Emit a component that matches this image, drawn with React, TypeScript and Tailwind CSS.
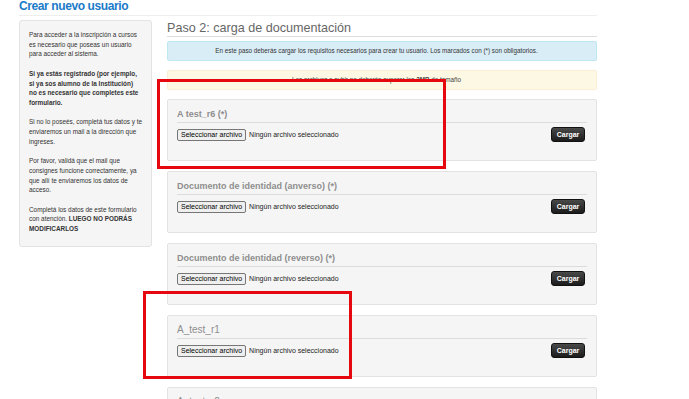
const docs = [
  { title: "A test_r6 (*)", bold: true },
  { title: "Documento de identidad (anverso) (*)", bold: true },
  { title: "Documento de identidad (reverso) (*)", bold: true },
  { title: "A_test_r1", bold: false },
  { title: "A_test_r2", bold: false },
];

function FileField() {
  return (
    <div className="flex items-center">
      <span className="h-[12px] px-[3px] flex items-center border border-[#767676] bg-[#efefef] rounded-[2px] text-[7px] leading-none text-black">
        Seleccionar archivo
      </span>
      <span className="ml-[3px] text-[7px] leading-none text-[#222]">
        Ningún archivo seleccionado
      </span>
    </div>
  );
}

function DocCard({ title, bold }: { title: string; bold: boolean }) {
  return (
    <div className="h-[62px] shrink-0 bg-[#f5f5f5] border border-[#e3e3e3] rounded-[2px] px-[9px] pt-[8px]">
      <div
        className={`h-[15px] border-b border-[#dcdcdc] leading-[12px] text-[#8e8e8e] ${
          bold ? "text-[9px] font-bold" : "text-[10px]"
        }`}
      >
        {title}
      </div>
      <div className="mt-[4px] h-[15px] flex items-center justify-between pr-[2px]">
        <FileField />
        <button className="w-[34px] h-[15px] rounded-[3px] border border-[#111] bg-linear-to-b from-[#4a4a4a] to-[#1c1c1c] text-white text-[7px] font-bold leading-none">
          Cargar
        </button>
      </div>
    </div>
  );
}

export default function App() {
  return (
    <div className="w-[689px] h-[399px] overflow-hidden bg-white relative font-['Liberation_Sans',Arial,sans-serif]">
      <div className="ml-[19px] w-[578px]">
        <h1 className="h-[16px] border-b border-[#eee] text-[12px] leading-[12px] font-bold tracking-[-0.4px] text-[#1a7bc9]">
          Crear nuevo usuario
        </h1>

        <div className="mt-[4px] flex gap-[15px] items-start">
          {/* Sidebar */}
          <div className="w-[133px] h-[227px] shrink-0 bg-[#f5f5f5] border border-[#e3e3e3] rounded-[3px] pl-[9px] pt-[9px] text-[6.4px] leading-[9.7px] text-[#333] whitespace-nowrap">
            <p className="mb-[9.7px]">
              Para acceder a la inscripción a cursos
              <br />
              es necesario que poseas un usuario
              <br />
              para acceder al sistema.
            </p>
            <p className="mb-[9.7px] font-bold">
              Si ya estás registrado (por ejemplo,
              <br />
              si ya sos alumno de la Institución)
              <br />
              no es necesario que completes este
              <br />
              formulario.
            </p>
            <p className="mb-[9.7px]">
              Si no lo poseés, completá tus datos y te
              <br />
              enviaremos un mail a la dirección que
              <br />
              ingreses.
            </p>
            <p className="mb-[9.7px]">
              Por favor, validá que el mail que
              <br />
              consignes funcione correctamente, ya
              <br />
              que allí te enviaremos los datos de
              <br />
              acceso.
            </p>
            <p>
              Completá los datos de este formulario
              <br />
              con atención. <b>LUEGO NO PODRÁS</b>
              <br />
              <b>MODIFICARLOS</b>
            </p>
          </div>

          {/* Main column */}
          <div className="w-[430px] flex flex-col">
            <h2 className="h-[17px] border-b border-[#ddd] text-[12.6px] leading-[16px] text-[#666]">
              Paso 2: carga de documentación
            </h2>
            <div className="mt-[4px] h-[20px] bg-[#d9edf7] border border-[#bce8f1] rounded-[2px] pl-[7px] pr-[18px] flex items-center justify-center text-[6.3px] text-[#333]">
              En este paso deberás cargar los requisitos necesarios para crear tu usuario. Los marcados con (*) son obligatorios.
            </div>
            <div className="mt-[9px] h-[20px] bg-[#fcf8e3] border border-[#fbeed5] rounded-[2px] pl-[7px] pr-[18px] flex items-center justify-center text-[6.3px] text-[#444]">
              <span>
                Los archivos a subir no deberán superar los <b>2MB</b> de tamaño
              </span>
            </div>
            <div className="mt-[9px] flex flex-col gap-[10px]">
              {docs.map((d) => (
                <DocCard key={d.title} title={d.title} bold={d.bold} />
              ))}
            </div>
          </div>
        </div>
      </div>

      {/* annotations */}
      <div className="absolute left-[157px] top-[79px] w-[289px] h-[90px] border-[3px] border-[#e5090f]" />
      <div className="absolute left-[143px] top-[291px] w-[209px] h-[88px] border-[3px] border-[#e5090f]" />
    </div>
  );
}
